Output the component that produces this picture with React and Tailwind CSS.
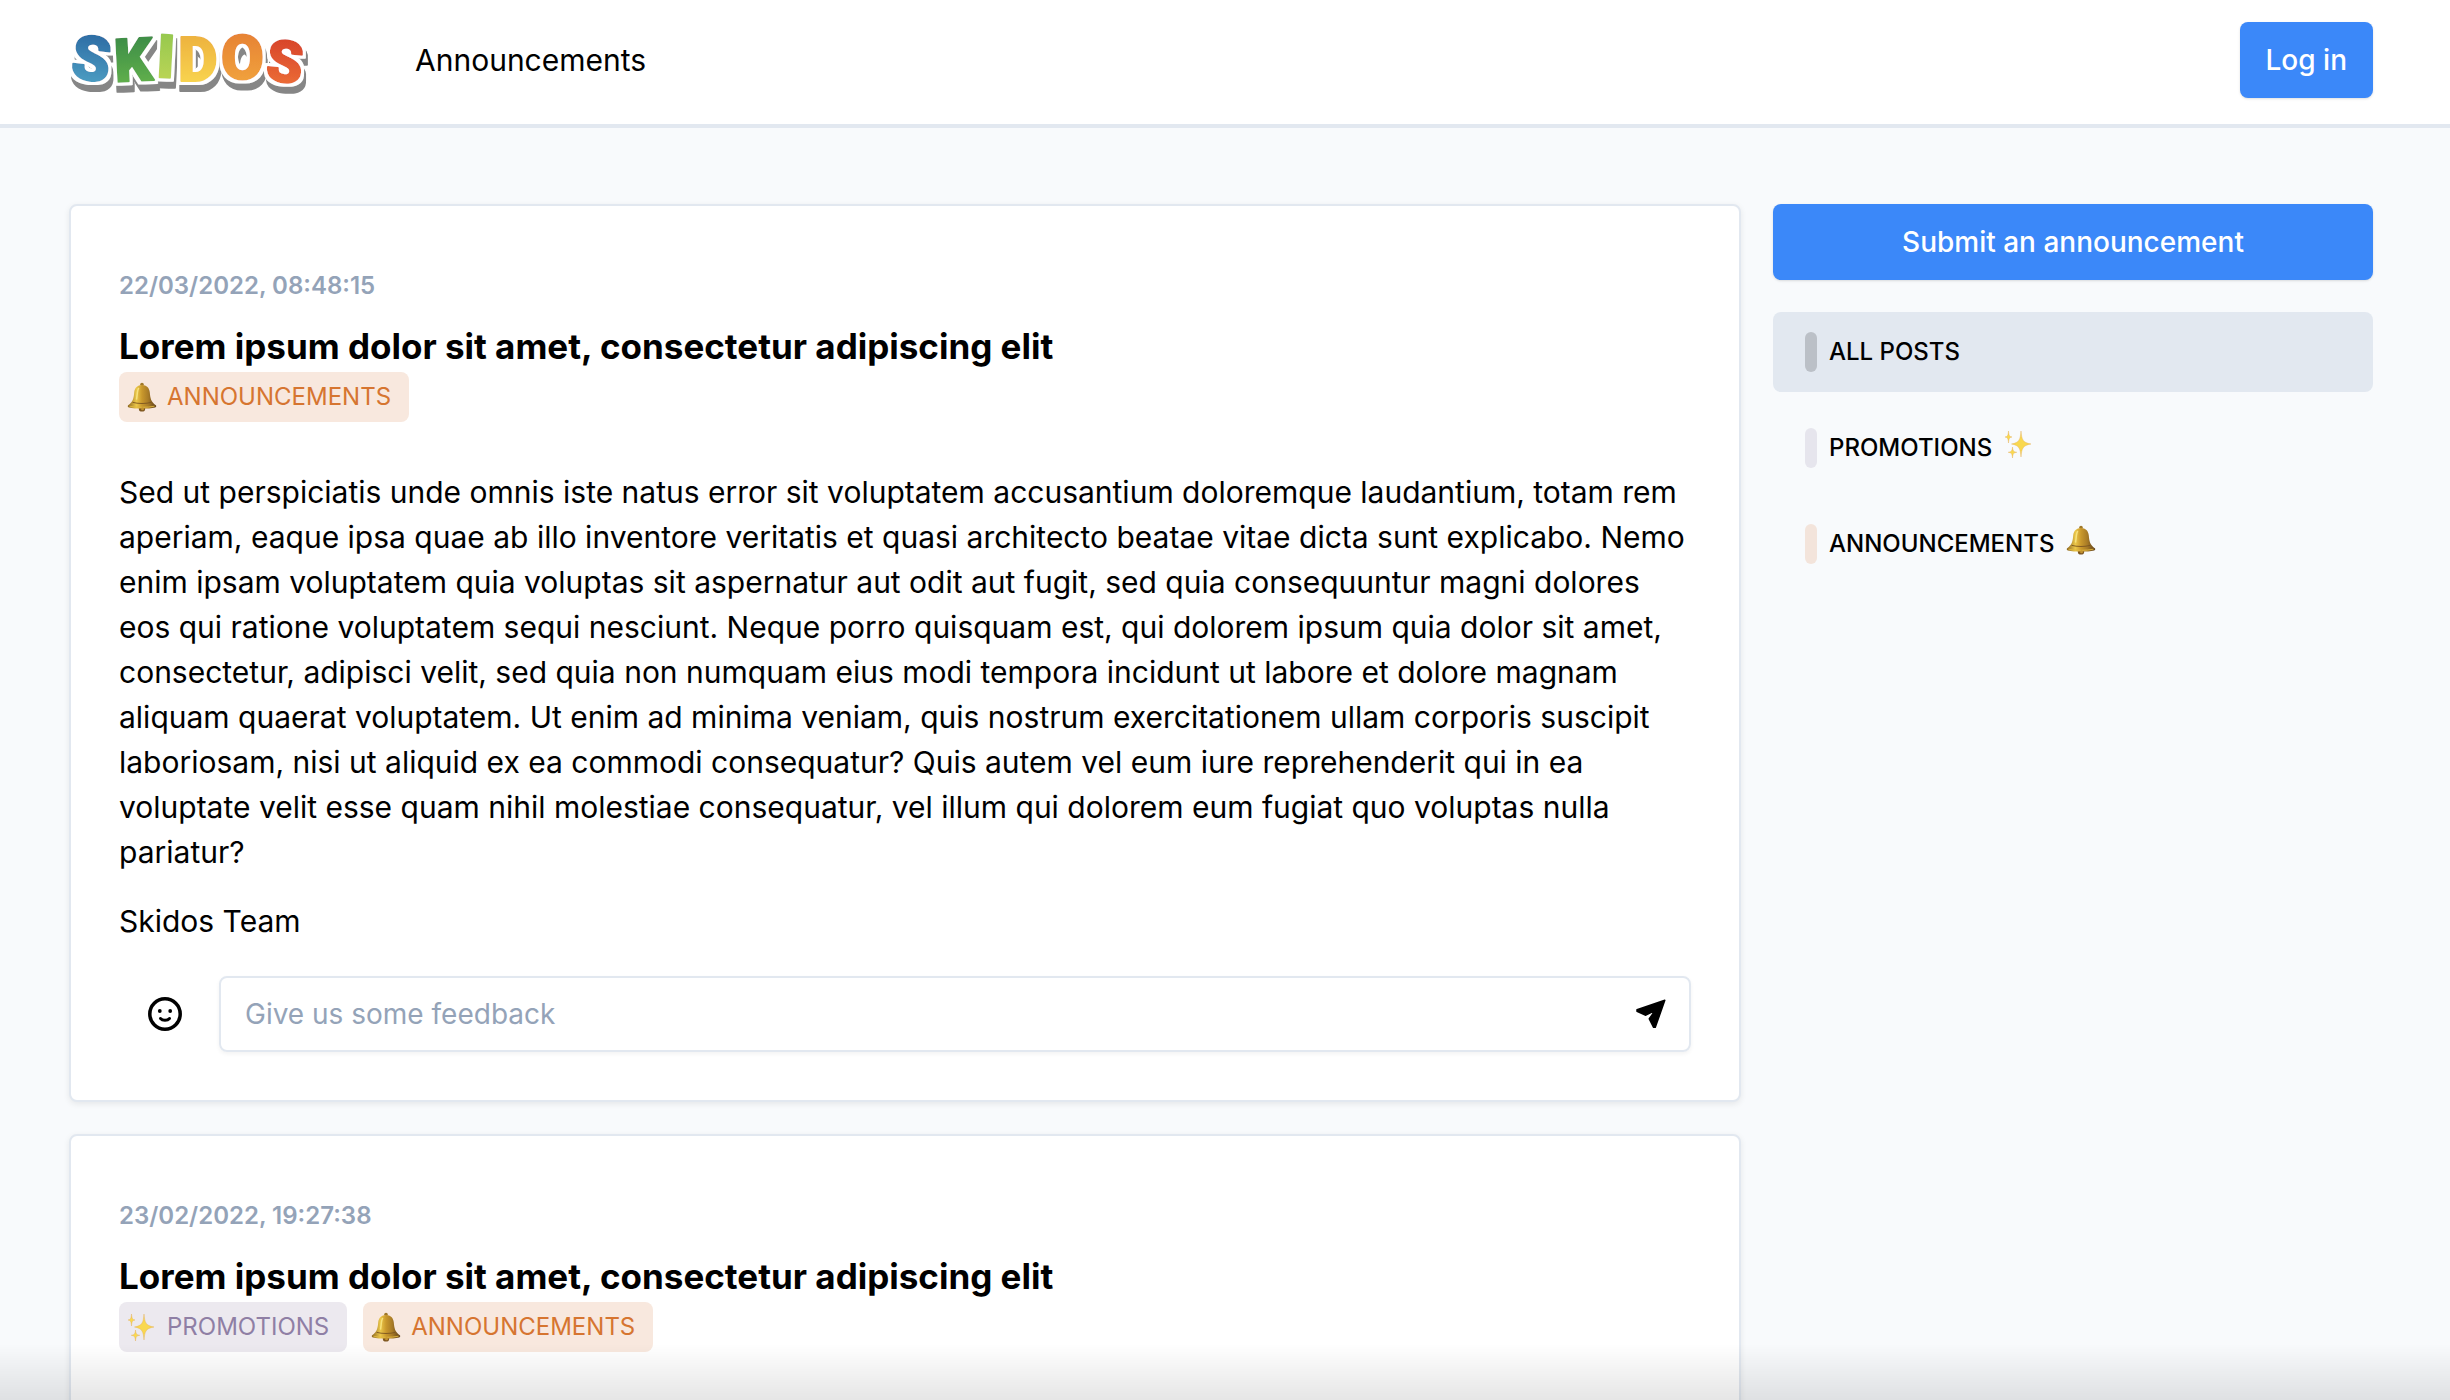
import { useId } from "react";

const LOGO_LETTERS = [
  { char: "S", x: 8, y: 60, size: 62, rotate: 7, from: "#2f6fa6", to: "#4a9ac0" },
  { char: "K", x: 50, y: 61, size: 60, rotate: -3, from: "#3f8f47", to: "#5fae4c" },
  { char: "I", x: 93, y: 58, size: 60, rotate: 3, from: "#98c94f", to: "#b9d455" },
  { char: "D", x: 114, y: 61, size: 61, rotate: 0, from: "#eeb43f", to: "#f8d34f" },
  { char: "O", x: 157, y: 59, size: 62, rotate: 0, from: "#e78435", to: "#f0a03c" },
  { char: "S", x: 203, y: 62, size: 58, rotate: 6, from: "#d9472c", to: "#ea6a35" },
];

function Logo() {
  return (
    <svg viewBox="0 0 250 80" className="h-20 w-[250px]" role="img" aria-label="SKIDOS">
      <defs>
        {LOGO_LETTERS.map((l, i) => (
          <linearGradient key={i} id={`logo-${i}`} x1="0" y1="0" x2="0" y2="1">
            <stop offset="0.2" stopColor={l.from} />
            <stop offset="0.8" stopColor={l.to} />
          </linearGradient>
        ))}
        <filter id="logo-outline" filterUnits="userSpaceOnUse" x="0" y="0" width="250" height="80">
          <feMorphology in="SourceAlpha" operator="dilate" radius="3" result="fat" />
          <feFlood floodColor="#ffffff" />
          <feComposite in2="fat" operator="in" result="outline" />
          <feOffset in="fat" dx="2" dy="7" result="moved" />
          <feFlood floodColor="#868686" />
          <feComposite in2="moved" operator="in" result="shadow" />
          <feMerge>
            <feMergeNode in="shadow" />
            <feMergeNode in="outline" />
            <feMergeNode in="SourceGraphic" />
          </feMerge>
        </filter>
      </defs>
      <g filter="url(#logo-outline)" className="font-['Roboto'] font-black">
        {LOGO_LETTERS.map((l, i) => (
          <text
            key={i}
            x={l.x}
            y={l.y}
            fontSize={l.size}
            fill={`url(#logo-${i})`}
            stroke={`url(#logo-${i})`}
            strokeWidth="2"
            strokeLinejoin="round"
            transform={`rotate(${l.rotate} ${l.x + 18} ${l.y - 22})`}
          >
            {l.char}
          </text>
        ))}
      </g>
    </svg>
  );
}

function Bell({ className }) {
  const id = useId();
  return (
    <svg viewBox="0 0 30 30" className={className} aria-hidden="true">
      <defs>
        <linearGradient id={id} x1="0" x2="1" y1="0" y2="0">
          <stop offset="0" stopColor="#8a6420" />
          <stop offset="0.3" stopColor="#ecc84a" />
          <stop offset="0.5" stopColor="#c9982c" />
          <stop offset="0.72" stopColor="#a87b26" />
          <stop offset="1" stopColor="#5e3f1a" />
        </linearGradient>
      </defs>
      <circle cx="15" cy="2.6" r="1.8" fill="#a07828" />
      <circle cx="15" cy="26.4" r="3.2" fill="#7d5620" />
      <path
        d="M15 3c-4.6 0-7.4 3-7.8 7.400C6.800 16 6 19.500 1.200 23.300c-.8.7-.5 1.900.6 2.100 7 1.600 19.400 1.600 26.400 0 1.100-.2 1.400-1.400.6-2.100C24 19.500 23.200 16 22.800 10.400 22.400 6 19.600 3 15 3z"
        fill={`url(#${id})`}
      />
      <path d="M5.500 20.300c5.500 1.600 13.500 1.600 19 0" fill="none" stroke="#7a5520" strokeWidth="0.9" />
      <path d="M2.500 24.200c7 1.500 18 1.500 25 0" fill="none" stroke="#e0b83f" strokeWidth="0.9" />
      <path d="M11.500 6.500c-1.300 2-1.200 6.500-1.900 10.500" fill="none" stroke="#f7e27c" strokeWidth="1.500" strokeLinecap="round" />
      <circle cx="15.500" cy="26.800" r="1.500" fill="#c2922f" />
    </svg>
  );
}

function Sparkles({ className }) {
  return (
    <svg viewBox="0 0 30 30" className={className} aria-hidden="true">
      <g fill="#f9d84f" stroke="#e3ac55" strokeWidth="0.4" strokeLinejoin="round">
        <path d="M17 2C17.800 10.500 18.500 13.500 27 15C18.500 16.500 17.800 19.500 17 28C16.200 19.500 15.500 16.500 7.500 15C15.500 13.500 16.200 10.500 17 2z" />
        <path d="M4.500 2C5 6.500 5.200 7.500 8 8C5.200 8.500 5 9.500 4.500 14C4 9.500 3.800 8.500 1 8C3.800 7.500 4 6.500 4.500 2z" />
        <path d="M8.500 18C9 22 9.500 22.800 12.800 23.300C9.500 23.800 9 24.500 8.500 29C8 24.500 7.500 23.800 4.200 23.300C7.500 22.800 8 22 8.500 18z" />
      </g>
    </svg>
  );
}

function SmileIcon() {
  return (
    <svg viewBox="0 0 36 36" className="size-9" fill="none" stroke="currentColor" strokeWidth="3.500" strokeLinecap="round" aria-hidden="true">
      <circle cx="18" cy="18" r="15.200" />
      <path d="M13.500 22.500c2 2.300 7 2.300 9 0" strokeWidth="3" />
      <circle cx="12.800" cy="15" r="1.900" fill="currentColor" stroke="none" />
      <circle cx="23.200" cy="15" r="1.900" fill="currentColor" stroke="none" />
    </svg>
  );
}

function SendIcon() {
  return (
    <svg viewBox="0 0 32 32" className="size-8" fill="currentColor" stroke="currentColor" strokeWidth="1.500" strokeLinejoin="round" aria-hidden="true">
      <path d="M29.800 2.200 20.300 29.300H18.600L14.300 20.800 20 12.700 10.800 17.200 2 13.300V11.800z" />
    </svg>
  );
}

const CATEGORIES = {
  promotions: {
    label: "PROMOTIONS",
    Icon: Sparkles,
    tag: "bg-[#ece9ef] text-[#8f7fa5]",
    bar: "bg-[#e6e5ed]",
  },
  announcements: {
    label: "ANNOUNCEMENTS",
    Icon: Bell,
    tag: "bg-[#f8e8de] text-[#d67530]",
    bar: "bg-[#f3e4db]",
  },
};

function Tag({ category }) {
  const { label, Icon, tag } = CATEGORIES[category];
  return (
    <li className={`flex h-[50px] items-center gap-2.5 rounded-lg pr-[18px] pl-2 text-2xl ${tag}`}>
      <Icon className="size-[30px]" />
      {label}
    </li>
  );
}

function Post({ date, title, tags, children }) {
  return (
    <article className="rounded-lg border-2 border-[#e2e8f0] bg-white p-12 shadow-[0_2px_6px_rgba(0,0,0,0.08)]">
      <time className="mt-4 block text-2xl leading-8 font-semibold text-[#94a3b8]">{date}</time>
      <h2 className="mt-6 text-[35px] leading-10 font-bold">{title}</h2>
      <ul className="mt-1.5 flex gap-4">
        {tags.map((t) => (
          <Tag key={t} category={t} />
        ))}
      </ul>
      <div className="mt-12">{children}</div>
    </article>
  );
}

function Feedback() {
  return (
    <form className="mt-8 flex items-center" onSubmit={(e) => e.preventDefault()}>
      <button type="button" aria-label="Add a reaction" className="flex w-[100px] shrink-0 justify-center pr-2">
        <SmileIcon />
      </button>
      <div className="flex h-[76px] flex-1 items-center rounded-lg border-2 border-[#e2e8f0] pr-[22px] pl-6 shadow-[0_2px_4px_rgba(0,0,0,0.05)]">
        <input
          type="text"
          aria-label="Feedback"
          placeholder="Give us some feedback"
          className="min-w-0 flex-1 bg-transparent text-[28px] outline-none placeholder:text-[#94a3b8]"
        />
        <button type="submit" aria-label="Send feedback">
          <SendIcon />
        </button>
      </div>
    </form>
  );
}

function FilterItem({ label, bar, Icon, active }) {
  return (
    <button
      type="button"
      className={`flex h-20 w-full items-center rounded-lg px-8 text-2xl font-medium ${active ? "bg-[#e2e8f0]" : ""}`}
    >
      <span className={`mr-3 h-10 w-3 rounded-full ${bar}`} />
      {label}
      {Icon && <Icon className="mb-2 ml-3 size-[30px]" />}
    </button>
  );
}

export default function App() {
  return (
    <div className="h-screen overflow-hidden bg-[#f8fafc] font-['Inter',sans-serif] text-black">
      <header className="flex h-32 items-center border-b-4 border-[#e2e8f0] bg-white pr-[77px] pb-1 pl-16">
        <a href="#" className="shrink-0">
          <Logo />
        </a>
        <nav className="ml-[101px] flex-1">
          <a href="#announcements" className="text-[30px] leading-[45px]">Announcements</a>
        </nav>
        <button type="button" className="h-[76px] rounded-lg bg-[#3b88f9] px-[26px] text-[28px] font-medium text-white shadow-sm">
          Log in
        </button>
      </header>

      <div className="flex items-start gap-8 pt-[76px] pr-[77px] pl-[69px]">
        <main className="flex min-w-0 flex-1 flex-col gap-8">
          <Post
            date="22/03/2022, 08:48:15"
            title="Lorem ipsum dolor sit amet, consectetur adipiscing elit"
            tags={["announcements"]}
          >
            <div className="space-y-6 text-[30px] leading-[45px]">
              <p>
                Sed ut perspiciatis unde omnis iste natus error sit voluptatem accusantium doloremque laudantium, totam
                rem aperiam, eaque ipsa quae ab illo inventore veritatis et quasi architecto beatae vitae dicta sunt
                explicabo. Nemo enim ipsam voluptatem quia voluptas sit aspernatur aut odit aut fugit, sed quia
                consequuntur magni dolores eos qui ratione voluptatem sequi nesciunt. Neque porro quisquam est, qui
                dolorem ipsum quia dolor sit amet, consectetur, adipisci velit, sed quia non numquam eius modi tempora
                incidunt ut labore et dolore magnam aliquam quaerat voluptatem. Ut enim ad minima veniam, quis nostrum
                exercitationem ullam corporis suscipit laboriosam, nisi ut aliquid ex ea commodi consequatur? Quis autem
                vel eum iure reprehenderit qui in ea voluptate velit esse quam nihil molestiae consequatur, vel illum qui
                dolorem eum fugiat quo voluptas nulla pariatur?
              </p>
              <p>Skidos Team</p>
            </div>
            <Feedback />
          </Post>
          <Post
            date="23/02/2022, 19:27:38"
            title="Lorem ipsum dolor sit amet, consectetur adipiscing elit"
            tags={["promotions", "announcements"]}
          />
        </main>

        <aside className="w-[600px] shrink-0">
          <button type="button" className="h-[76px] w-full rounded-lg bg-[#3b88f9] text-[28px] font-medium text-white shadow-sm">
            Submit an announcement
          </button>
          <div className="mt-8 flex flex-col gap-4">
            <FilterItem label="ALL POSTS" bar="bg-[#bbc0c7]" active />
            <FilterItem {...CATEGORIES.promotions} />
            <FilterItem {...CATEGORIES.announcements} />
          </div>
        </aside>
      </div>

      <div className="pointer-events-none fixed inset-x-0 bottom-0 h-14 bg-linear-to-t from-black/10 to-transparent" />
    </div>
  );
}
